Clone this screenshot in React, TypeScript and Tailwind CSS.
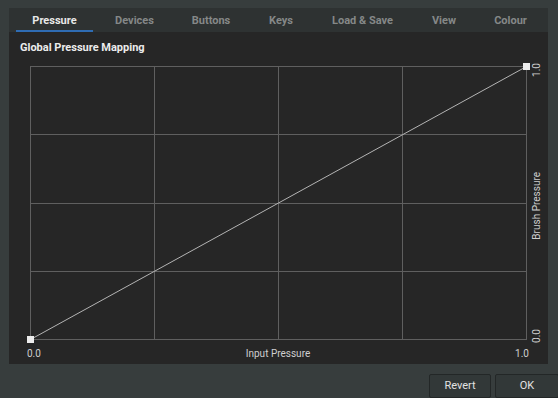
const tabs = [
  { label: "Pressure", w: "w-[77px]", active: true },
  { label: "Devices", w: "w-[83px]" },
  { label: "Buttons", w: "w-[70px]" },
  { label: "Keys", w: "w-[70px]" },
  { label: "Load & Save", w: "w-[93px]" },
  { label: "View", w: "w-[70px]" },
  { label: "Colour", w: "w-[63px]" },
]

function PressureCurve() {
  // plot area 496 x 273, grid split in quarters
  const W = 496
  const H = 273
  const xs = [0, 124, 248, 372, 496]
  const ys = [0, 68.25, 136.5, 204.75, 273]
  return (
    <svg width={W + 1} height={H + 1} className="overflow-visible block">
      {xs.map((x) => (
        <line key={"v" + x} x1={x + 0.5} y1={0} x2={x + 0.5} y2={H + 1} stroke="#5f5f5f" strokeWidth={1} />
      ))}
      {ys.map((y) => (
        <line key={"h" + y} x1={0} y1={Math.round(y) + 0.5} x2={W + 1} y2={Math.round(y) + 0.5} stroke="#5f5f5f" strokeWidth={1} />
      ))}
      <line x1={0.5} y1={H + 0.5} x2={W + 0.5} y2={0.5} stroke="#b4b4b4" strokeWidth={1} />
      <rect x={-3} y={H - 3} width={7} height={7} fill="#ececec" />
      <rect x={W - 3} y={-3} width={7} height={7} fill="#ececec" />
    </svg>
  )
}

export default function App() {
  return (
    <div
      className="w-[558px] h-[398px] overflow-hidden bg-[#373d3d] flex flex-col text-[11px]"
      style={{ fontFamily: 'Roboto, "Noto Sans", sans-serif' }}
    >
      <div className="ml-[9px] mt-[8px] w-[539px] h-[359px] flex flex-col bg-[#262626]">
        <div className="h-[24px] flex bg-[#2e3232] pl-[7px]">
          {tabs.map((t) => (
            <div
              key={t.label}
              className={`${t.w} h-full pt-[2px] flex items-center justify-center font-bold ${
                t.active ? "text-[#e8e8e8] shadow-[inset_0_-2px_0_#2f6cb3]" : "text-[#858888]"
              }`}
            >
              {t.label}
            </div>
          ))}
        </div>

        <div className="flex flex-col px-[11px] pt-[9px]">
          <div className="font-bold text-[#ececec] leading-[14px]">Global Pressure Mapping</div>

          <div className="flex mt-[11px] ml-[10px]">
            <PressureCurve />
            <div className="flex flex-col justify-between items-center h-[274px] w-[16px] ml-[5px] text-[#cfcfcf] text-[10px] leading-none">
              <span className="[writing-mode:vertical-rl] rotate-180 -mt-[3px]">1.0</span>
              <span className="[writing-mode:vertical-rl] rotate-180 mt-[6px]">Brush Pressure</span>
              <span className="[writing-mode:vertical-rl] rotate-180 -mb-[3px]">0.0</span>
            </div>
          </div>

          <div className="flex justify-between items-center w-[502px] ml-[7px] mt-[7px] text-[#cfcfcf] text-[10px] leading-[14px]">
            <span>0.0</span>
            <span>Input Pressure</span>
            <span>1.0</span>
          </div>
        </div>
      </div>

      <div className="flex justify-end gap-[4px] mt-[10px]">
        <button className="w-[62px] h-[24px] rounded-[2px] bg-[#323838] border border-[#232727] text-[#e2e2e2]">
          Revert
        </button>
        <button className="w-[64px] h-[24px] rounded-[2px] bg-[#323838] border border-[#232727] text-[#e2e2e2] -mr-[1px]">
          OK
        </button>
      </div>
    </div>
  )
}
